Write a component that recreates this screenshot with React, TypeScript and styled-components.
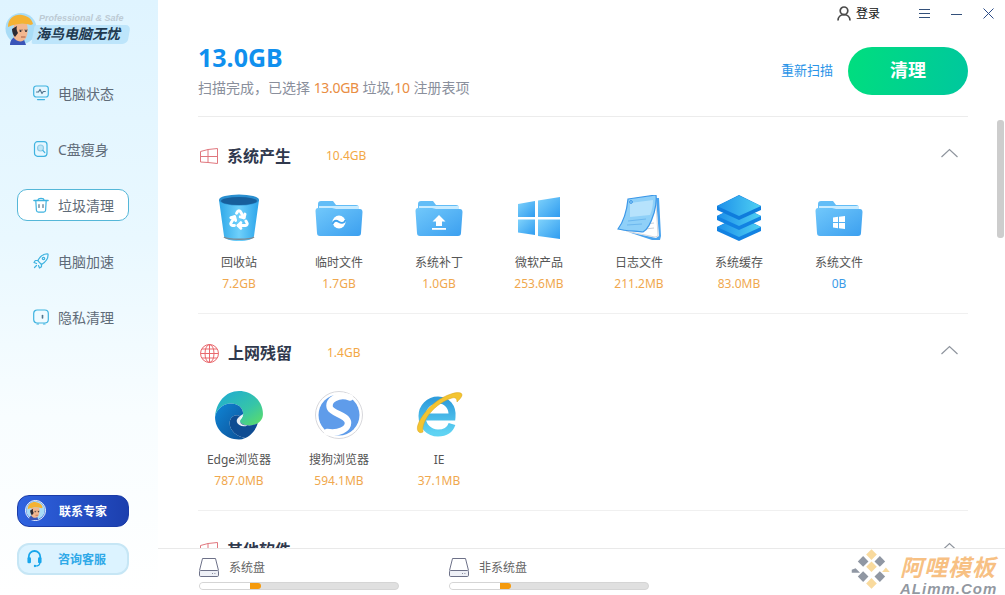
import React from 'react'
import styled, { createGlobalStyle } from 'styled-components'
import { Recycle } from 'lucide-react'

const GlobalStyle = createGlobalStyle`
  html, body {
    margin: 0;
    padding: 0;
    background: #fff;
  }
  body {
    font-family: "Noto Sans", "Noto Sans CJK SC", sans-serif;
  }
`

const Frame = styled.div`
  position: relative;
  display: flex;
  width: 1005px;
  height: 595px;
  overflow: hidden;
  background: #fff;
`

const Sidebar = styled.aside`
  display: flex;
  flex-direction: column;
  flex: 0 0 158px;
  box-sizing: border-box;
  padding: 13px 29px 20px 17px;
  background: linear-gradient(180deg, #dff4ff 0%, #e9f8ff 40%, #f8fdff 70%, #ffffff 100%);
`

const Logo = styled.div`
  display: flex;
  align-items: flex-start;
  height: 33px;
  margin-left: -12px;
  width: 124px;
`

const LogoText = styled.div`
  display: flex;
  flex-direction: column;
  margin-left: -4px;
  flex: 1;
`

const LogoSlogan = styled.span`
  font: italic 700 9px/11px "Liberation Sans", sans-serif;
  color: #bccad4;
  margin: 0 0 0 6px;
  white-space: nowrap;
`

const LogoBanner = styled.span`
  position: relative;
  display: block;
  height: 19px;
  margin-top: 1px;
  padding-left: 3px;
  font: italic 700 14px/17px "Noto Sans CJK SC", sans-serif;
  color: #1f3a50;
  white-space: nowrap;

  &::before {
    content: '';
    position: absolute;
    inset: 0;
    z-index: 0;
    background: #bde5fb;
    border-radius: 2px 5px 5px 2px;
    transform: skewX(-10deg);
  }
`

const LogoName = styled.span`
  position: relative;
`

const Nav = styled.nav`
  display: flex;
  flex-direction: column;
  gap: 24px;
  margin-top: 31px;
`

const NavItem = styled.div<{ $active?: boolean }>`
  display: flex;
  align-items: center;
  gap: 9px;
  box-sizing: border-box;
  height: 32px;
  padding-left: ${p => (p.$active ? '15px' : '16px')};
  border: ${p => (p.$active ? '1px solid #55b7d8' : '0 none')};
  border-radius: 10px;
  background: ${p => (p.$active ? '#fff' : 'transparent')};
  font-size: 14px;
  color: #5f6b78;
`

const SideButton = styled.div<{ $dark?: boolean }>`
  display: flex;
  align-items: center;
  box-sizing: border-box;
  height: 32px;
  padding: 0 0 1px 8px;
  border-radius: 12px;
  border: ${p => (p.$dark ? '1px solid #1b3ca8' : '2px solid #c6e6f5')};
  background: ${p => (p.$dark ? 'linear-gradient(90deg, #2f63e0, #1c3fae)' : '#dcf3ff')};
  font-size: 12px;
  font-weight: 700;
  color: ${p => (p.$dark ? '#fff' : '#2fa9e8')};
`

const SideButtons = styled.div`
  display: flex;
  flex-direction: column;
  gap: 16px;
  margin-top: auto;
`

const SideButtonLabel = styled.span<{ $dark?: boolean }>`
  margin-left: ${p => (p.$dark ? '13px' : '16px')};
`

const RingedAvatar = styled.span`
  display: flex;
  border: 1px solid #fff;
  border-radius: 50%;
  margin-left: -1px;
`

const Main = styled.main`
  display: flex;
  flex-direction: column;
  flex: 1;
  min-width: 0;
`

const Content = styled.div`
  flex: 1;
  min-height: 0;
  overflow: hidden;
`

const TitleBar = styled.div`
  display: flex;
  align-items: center;
  height: 27px;
  padding-right: 11px;
  justify-content: flex-end;
`

const Login = styled.div`
  display: flex;
  align-items: center;
  gap: 5px;
  margin-right: 39px;
  padding-bottom: 1px;
  font-size: 12px;
  color: #111;
`

const WinButtons = styled.div`
  display: flex;
  gap: 21px;
`

const Summary = styled.div`
  display: flex;
  align-items: flex-start;
  box-sizing: border-box;
  height: 90px;
  margin: 0 37px 0 40px;
  padding-top: 20px;
  border-bottom: 1px solid #ececec;
`

const SummaryText = styled.div`
  flex: 1;
`

const Total = styled.div`
  margin-top: -2px;
  font-size: 25px;
  line-height: 24px;
  font-weight: 700;
  color: #1090ee;
`

const SummaryLine = styled.div`
  margin-top: 9px;
  font-size: 14px;
  line-height: 20px;
  color: #8a8f9c;
`

const Hot = styled.span`
  letter-spacing: -0.3px;
  color: #e98d42;
`

const Rescan = styled.span`
  margin: 13px 15px 0 0;
  font-size: 13px;
  line-height: 20px;
  color: #2a94e8;
`

const CleanButton = styled.div`
  display: flex;
  align-items: center;
  justify-content: center;
  box-sizing: border-box;
  width: 120px;
  height: 48px;
  padding-bottom: 5px;
  border-radius: 24px;
  background: linear-gradient(100deg, #00de7e, #00c79e);
  font-size: 18px;
  font-weight: 700;
  color: #fff;
`

const Section = styled.section`
  margin: 0 37px 0 40px;
  padding-bottom: 18px;
  border-bottom: 1px solid #f0f0f0;
`

const SectionHeader = styled.div`
  display: flex;
  align-items: center;
  height: 78px;
  padding: 0 10px 0 2px;
`

const SectionTitle = styled.h2`
  margin: 0 0 2px 9px;
  width: 99px;
  font-size: 16px;
  font-weight: 700;
  color: #30394d;
`

const SectionSize = styled.span`
  flex: 1;
  padding-bottom: 1px;
  font-size: 12px;
  color: #f3a845;
`

const ChevronBox = styled.span`
  display: flex;
  margin-bottom: 6px;
`

const Items = styled.div`
  display: flex;
  margin-left: -9px;
`

const Item = styled.div`
  display: flex;
  flex-direction: column;
  align-items: center;
  width: 100px;
`

const ItemIcon = styled.div`
  display: flex;
  align-items: center;
  justify-content: center;
  height: 46px;
  margin-bottom: 11px;
`

const ItemLabel = styled.span`
  font-size: 12px;
  line-height: 21px;
  color: #555;
`

const ItemSize = styled.span<{ $zero?: boolean }>`
  font-size: 12px;
  line-height: 22px;
  color: ${p => (p.$zero ? '#3a9be8' : '#f0a84e')};
`

const Footer = styled.footer`
  display: flex;
  gap: 50px;
  box-sizing: border-box;
  flex: 0 0 47px;
  padding: 8px 0 0 41px;
  border-top: 1px solid #e9e9e9;
  background: #fff;
`

const Disk = styled.div`
  width: 200px;
`

const DiskHead = styled.div`
  display: flex;
  align-items: center;
  gap: 10px;
  height: 20px;
  font-size: 12px;
  color: #666;
`

const DiskBar = styled.div`
  position: relative;
  box-sizing: border-box;
  height: 8px;
  margin-top: 5px;
  border: 1px solid #d5d5d5;
  border-radius: 4px;
  background: #e0e0e0;
  overflow: hidden;
`

const DiskFill = styled.div`
  height: 100%;
  border-radius: 0 4px 4px 0;
  background: linear-gradient(90deg, #fff 0, #fff 82%, #f59a0c 82%, #f59a0c 100%);
`

const ScrollThumb = styled.div`
  position: absolute;
  left: 997px;
  top: 120px;
  width: 7px;
  height: 118px;
  border-radius: 3px;
  background: #cdcdcd;
`

const Watermark = styled.div`
  position: absolute;
  right: 8px;
  bottom: 0;
  display: flex;
  gap: 5px;
  width: 146px;
  height: 50px;
  pointer-events: none;
`

const WatermarkText = styled.div`
  display: flex;
  flex-direction: column;
`

const WatermarkCn = styled.span`
  margin-top: 8px;
  font: italic 700 23px/26px "Noto Sans CJK SC", sans-serif;
  letter-spacing: 1px;
  color: rgba(245, 172, 90, 0.75);
  white-space: nowrap;
`

const WatermarkEn = styled.span`
  margin-top: 3px;
  font: italic 700 15px/13px "Liberation Sans", sans-serif;
  letter-spacing: 1px;
  color: rgba(110, 118, 130, 0.75);
  white-space: nowrap;
`

const navStroke = { fill: 'none', stroke: '#3fb3e0', strokeWidth: 1.2, strokeLinecap: 'round', strokeLinejoin: 'round' } as const

const StatusIcon = () => (
  <svg width="16" height="16" viewBox="0 0 16 16" {...navStroke}>
    <rect x="0.7" y="1" width="14.6" height="11" rx="2.5" />
    <path d="M3.5 7h2l1.5-2.5 2 4 1.3-2h2" stroke="#52748c" />
    <path d="M4.5 14.6h7" />
  </svg>
)

const SlimIcon = () => (
  <svg width="16" height="16" viewBox="0 0 16 16" {...navStroke}>
    <rect x="1.5" y="0.7" width="12.5" height="14.6" rx="3" />
    <circle cx="7.5" cy="7" r="3" fill="#bfe6f6" stroke="#8fcbe6" />
    <path d="M9.8 9.4l2 2.2" />
  </svg>
)

const TrashIcon = () => (
  <svg width="16" height="16" viewBox="0 0 16 16" {...navStroke}>
    <path d="M1 3.5h14" strokeWidth="1.6" />
    <path d="M5 3.300c0-2.500 6-2.500 6 0" />
    <path d="M2.800 3.800l.6 9.400c.1 1.200 1 1.900 2 1.900h5.200c1 0 1.900-.7 2-1.900l.6-9.400" />
    <path d="M6 7.500v3M10 7.500v3" stroke="#52748c" />
  </svg>
)

const RocketIcon = () => (
  <svg width="16" height="16" viewBox="0 0 16 16" {...navStroke}>
    <path d="M15 1c.4 4-1.500 7.500-6.500 10.500L4.700 7.700C7.500 2.700 11 .6 15 1z" />
    <circle cx="10.500" cy="5.500" r="1.200" />
    <path d="M5 7.500H2.300L1 9.500l2.500 1M8.500 11v2.700l-2 1.300-1-2.500M3.500 12.500L1.500 14.500" />
  </svg>
)

const PrivacyIcon = () => (
  <svg width="16" height="16" viewBox="0 0 16 16" {...navStroke}>
    <rect x="0.7" y="1" width="14.6" height="13" rx="3.500" />
    <path d="M9.500 6.500v2.500" stroke="#52748c" strokeWidth="1.600" />
    <path d="M4 15h1.500M10.500 15H12" />
  </svg>
)

const Avatar = ({ size }: { size: number }) => (
  <svg width={size} height={size} viewBox="0 0 32 32" style={{ flex: 'none' }}>
    <circle cx="16" cy="15.500" r="15.500" fill="#a9dcf6" />
    <path d="M5 32c0-5 3-8 6-8h7l3 8z" fill="#3a55b8" />
    <path d="M9 11h13c1 5 1 10-1 14-2 3-5 4-8 3-3-1-5-4-5-8z" fill="#f2b78f" />
    <path d="M3 14C3 5 10 1 17 2c6 1 10 4 11 9l-2 1c-7-2-14-2-23 2z" fill="#f4b233" />
    <path d="M7 16l5-3c-1 3 0 5 1 7l-3 4c-2-2-3-5-3-8z" fill="#2b2a33" />
    <circle cx="15.500" cy="18" r="1" fill="#2b2a33" />
    <circle cx="21" cy="18" r="1" fill="#2b2a33" />
    <path d="M14 17h4M19 17h4" stroke="#6b5a50" strokeWidth=".6" />
    <path d="M16 24h4.500" stroke="#a65c44" strokeWidth="1" />
  </svg>
)

const Headset = () => (
  <svg width="15" height="19" viewBox="0 0 17 20">
    <path d="M2 10V8a6.500 6.500 0 0 1 13 0v2" fill="none" stroke="#18a6ec" strokeWidth="2" />
    <rect x="0.500" y="8.500" width="4" height="7" rx="1.500" fill="#18a6ec" />
    <rect x="12.500" y="8.500" width="4" height="7" rx="1.500" fill="#18a6ec" />
    <path d="M14.500 15c0 3-3 3.500-5 3.500" fill="none" stroke="#18a6ec" strokeWidth="1.400" />
    <circle cx="9" cy="18.500" r="1.300" fill="#18a6ec" />
  </svg>
)

const UserIcon = () => (
  <svg width="14" height="15" viewBox="0 0 14 15" fill="none" stroke="#4a4a4a" strokeWidth="1.700">
    <circle cx="7" cy="4.800" r="3.800" />
    <path d="M1 14.500c0-3.500 2.500-5.800 6-5.800s6 2.300 6 5.800" />
  </svg>
)

const MenuIcon = () => (
  <svg width="11" height="11" viewBox="0 0 11 11" stroke="#33507a" strokeWidth="1">
    <path d="M0 1.500h11M0 5.500h11M0 9.500h11" />
  </svg>
)

const MinIcon = () => (
  <svg width="11" height="11" viewBox="0 0 11 11" stroke="#33507a" strokeWidth="1">
    <path d="M0 6.500h11" />
  </svg>
)

const CloseIcon = () => (
  <svg width="11" height="11" viewBox="0 0 11 11" stroke="#2a4a86" strokeWidth="1">
    <path d="M.5.500l10 10M10.500.500l-10 10" />
  </svg>
)

const GridMark = () => (
  <svg width="18" height="16" viewBox="0 0 18 16" fill="none" stroke="#e0777e" strokeWidth="1">
    <path d="M.5 3.500L8 1.500v13L.5 14zM8 1.500L17.500.5v15L8 14.500M.5 8.500h17" />
  </svg>
)

const GlobeMark = () => (
  <svg width="19" height="19" viewBox="0 0 19 19" fill="none" stroke="#e9686d" strokeWidth="1">
    <circle cx="9.500" cy="9.500" r="9" />
    <ellipse cx="9.500" cy="9.500" rx="4.500" ry="9" />
    <path d="M9.500.5v18M.5 9.500h18M2 5h15M2 14h15" />
  </svg>
)

const Chevron = () => (
  <svg width="17" height="10" viewBox="0 0 17 10" fill="none" stroke="#8f959e" strokeWidth="1.200">
    <path d="M.5 9L8.500 1.500 16.500 9" />
  </svg>
)

const DiskIcon = () => (
  <svg width="20" height="19" viewBox="0 0 20 19" fill="none" stroke="#6d7188" strokeWidth="1">
    <path d="M.5 12.500L3.500.5h13l3 12" />
    <rect x=".5" y="12.500" width="19" height="6" rx="1.200" fill="#eef0f6" />
    <path d="M13 15.500h.8M15.500 15.500h.8" />
  </svg>
)

const Defs = () => (
  <svg width="0" height="0" style={{ position: 'absolute' }}>
    <defs>
      <linearGradient id="bin" x1="0" y1="0" x2="1" y2="0">
        <stop offset="0" stopColor="#2da7e8" />
        <stop offset=".5" stopColor="#6fd0fb" />
        <stop offset="1" stopColor="#2ba4ea" />
      </linearGradient>
      <linearGradient id="folder" x1="0" y1="0" x2="1" y2="1">
        <stop offset="0" stopColor="#71c8fb" />
        <stop offset="1" stopColor="#3b9fef" />
      </linearGradient>
      <linearGradient id="pane" x1="0" y1="0" x2="1" y2="1">
        <stop offset="0" stopColor="#7fd2fb" />
        <stop offset="1" stopColor="#2f9cf0" />
      </linearGradient>
      <linearGradient id="layer" x1="0" y1="0" x2="1" y2="0">
        <stop offset="0" stopColor="#1d90ea" />
        <stop offset="1" stopColor="#4fd0f2" />
      </linearGradient>
      <linearGradient id="edgeTop" x1="0" y1="0" x2="1" y2="1">
        <stop offset="0" stopColor="#1da8d8" />
        <stop offset=".6" stopColor="#36c5a8" />
        <stop offset="1" stopColor="#60df62" />
      </linearGradient>
      <linearGradient id="edgeLow" x1="0" y1="0" x2="1" y2="1">
        <stop offset="0" stopColor="#0f86d6" />
        <stop offset="1" stopColor="#0d4f96" />
      </linearGradient>
      <linearGradient id="ieBlue" x1="0" y1="0" x2="0" y2="1">
        <stop offset="0" stopColor="#2f9ddc" />
        <stop offset="1" stopColor="#5fd3f3" />
      </linearGradient>
    </defs>
  </svg>
)

const BinIcon = () => (
  <svg width="42" height="48" viewBox="0 0 42 48">
    <path d="M1 6l5 36c.3 3 7 5 15 5s14.700-2 15-5l5-36z" fill="url(#bin)" />
    <ellipse cx="21" cy="6" rx="20" ry="5.500" fill="#2a8fd0" />
    <ellipse cx="21" cy="7" rx="18" ry="4" fill="#175f9c" />
    <path d="M6 43c3 3 27 3 30 0" fill="none" stroke="#7c8a94" strokeWidth="1.500" />
    <Recycle x={10} y={14} width={22} height={22} color="#fff" strokeWidth={3.200} />
  </svg>
)

const FolderIcon = ({ children }: { children: React.ReactNode }) => (
  <svg width="48" height="38" viewBox="0 0 48 38">
    <path d="M3 5c0-2 1-3 3-3h12l3 4h20c2 0 3 1 3 3v8H3z" fill="#62bdf7" />
    <path d="M4 7h40v4H4z" fill="#c7ebff" />
    <path d="M3 9h14l4 1h24c1.500 0 2.500 1 2.500 3l-1.500 21c0 2-1 3-3 3H5c-2 0-3-1-3-3L.5 12c0-2 1-3 2.500-3z" fill="url(#folder)" />
    {children}
  </svg>
)

const TilesIcon = () => (
  <svg width="44" height="42" viewBox="0 0 44 42" fill="url(#pane)">
    <path d="M1 7l17-3v16H1z" />
    <path d="M21 3.500L43 0v20H21z" />
    <path d="M1 22.500h17V38L1 35.500z" />
    <path d="M21 22.500h22V42l-22-3z" />
  </svg>
)

const NoteIcon = () => (
  <svg width="46" height="46" viewBox="0 0 46 46">
    <path d="M12 37l28 6 3-2-3-38h3l2 38-1 4H36z" fill="#4aa3ee" />
    <path d="M10 36l7-24 23-4 2 33-3 1z" fill="#fff" stroke="#b8bcc4" strokeWidth=".6" />
    <path d="M20 20l17-3M20 25l17-3M20 30l18-2M20 35l18-2" stroke="#c9ced6" strokeWidth="1" />
    <path d="M12 4L40 0c1 8-1 14-2 18-3 10-7 17-11 19-6-1-18-1-25-3 6-8 9-20 10-30z" fill="#8fd0f8" stroke="#3b97e8" strokeWidth="1.200" />
    <path d="M14 8l23-3c0 6-1 10-3 15L14 22z" fill="#bfe6fc" opacity=".8" />
    <path d="M12 26l18-2M11 30l15-1" stroke="#6cb7ee" strokeWidth="1" />
    <circle cx="15" cy="7" r="1.400" fill="none" stroke="#3b97e8" />
  </svg>
)

const LayersIcon = () => (
  <svg width="46" height="48" viewBox="0 0 46 48">
    <path d="M1 33l22-11 22 11v4L23 47 1 37z" fill="#1282e2" />
    <path d="M1 33l22-10 22 10-22 10z" fill="url(#layer)" />
    <path d="M1 22L23 11l22 11v4L23 36 1 26z" fill="#1282e2" />
    <path d="M1 22l22-10 22 10-22 10z" fill="url(#layer)" />
    <path d="M1 12L23 1l22 11v4L23 26 1 16z" fill="#0f7cdc" />
    <path d="M1 12L23 1.500 45 12 23 22z" fill="url(#layer)" />
  </svg>
)

const EdgeIcon = () => (
  <svg width="50" height="50" viewBox="0 0 48 48">
    <path d="M1 26C2 12 11 1 24 1c13 0 23 10 23 22 0 7-6 11-13 11-5 0-9-2-9-4 0-2 3-3 3-7 0-6-5-10-12-10C9 13 2 19 1 26z" fill="url(#edgeTop)" />
    <path d="M1 26c1-7 8-13 15-13 7 0 12 4 12 10 0 1-1 2-2 3-4-4-11-1-11 6 0 7 7 13 15 14-2 1-4 1.500-6 1.500C11 47.500 1 38 1 26z" fill="url(#edgeLow)" />
    <path d="M15 32c0-7 7-10 11-6-1 1-1 2-1 4 0 2 4 4 9 4 3 0 6-1 8-2-2 7-8 13-12 14-8-1-15-7-15-14z" fill="#0f4c92" />
    <path d="M28 23c0 3-3 4-3 7s4 4 7 4c-4 2-9 0-10-3-1-4 3-6 6-8z" fill="#fff" opacity=".9" />
  </svg>
)

const SogouIcon = () => (
  <svg width="48" height="48" viewBox="0 0 48 48">
    <circle cx="24" cy="24" r="23.500" fill="#fff" stroke="#d8d8dc" strokeWidth="1" />
    <circle cx="24" cy="24" r="20.500" fill="#5f9cea" />
    <path d="M35 6.500C24 2 12 9 15 17c2.500 6 18 7 18 15 0 6-9 11-21 9" fill="none" stroke="#fff" strokeWidth="6.500" strokeLinecap="round" />
  </svg>
)

const IeIcon = () => (
  <svg width="48" height="48" viewBox="0 0 48 48">
    <path d="M8 26h29c1-10-5-17-14-17C14 9 7 16 7 25c0 10 7 17 16 17 7 0 12-3 14-9" fill="none" stroke="url(#ieBlue)" strokeWidth="7" />
    <path d="M15 21h15" stroke="url(#ieBlue)" strokeWidth="6" />
    <path d="M3 40C-1 34 14 10 36 3c6-2 11-2 11 1 0 2-3 5-5 7 0-3-1-5-5-4C20 12 6 30 8 41c-2 1-4 1-5-1z" fill="#f4c430" stroke="#d9a21c" strokeWidth=".5" />
  </svg>
)

const WatermarkMark = () => (
  <svg width="44" height="48" viewBox="0 0 58 52" style={{ flex: 'none' }} opacity=".85">
    <g fill="#f8d48c">
      <path d="M27 0l7 7-7 7-7-7z" />
      <path d="M27 16l7 7-7 7-7-7z" />
      <path d="M46 24l5 6H41z" />
      <path d="M27 38l7 7-7 7-7-7z" />
    </g>
    <g fill="#7d8694">
      <path d="M16 9l7 7-7 7-7-7z" />
      <path d="M38 9l7 7-7 7-7-7z" />
      <path d="M6 25l6 6H1v-4z" />
      <path d="M16 29l7 7-7 7-7-7z" />
      <path d="M38 29l7 7-7 7-7-7z" />
    </g>
  </svg>
)

const sections = [
  {
    title: '系统产生',
    size: '10.4GB',
    mark: <GridMark />,
    items: [
      { label: '回收站', size: '7.2GB', icon: <BinIcon /> },
      {
        label: '临时文件',
        size: '1.7GB',
        icon: (
          <FolderIcon>
            <circle cx="24" cy="23" r="6.500" fill="#fff" />
            <path d="M17.500 25c2-5 5-3 6.500-2s5 2 6.500-2" fill="none" stroke="#3fa3ef" strokeWidth="1.800" />
          </FolderIcon>
        ),
      },
      {
        label: '系统补丁',
        size: '1.0GB',
        icon: (
          <FolderIcon>
            <path d="M24 16l6.500 6.500H27V27h-6v-4.500h-3.500z" fill="#fff" />
            <path d="M17 29h14v1.800H17z" fill="#fff" />
          </FolderIcon>
        ),
      },
      { label: '微软产品', size: '253.6MB', icon: <TilesIcon /> },
      { label: '日志文件', size: '211.2MB', icon: <NoteIcon /> },
      { label: '系统缓存', size: '83.0MB', icon: <LayersIcon /> },
      {
        label: '系统文件',
        size: '0B',
        icon: (
          <FolderIcon>
            <path d="M18 18.500l5-.7v5.200h-5zM24 17.700l6-.7v6h-6zM18 24h5v5.200l-5-.7zM24 24h6v6l-6-.8z" fill="#fff" />
          </FolderIcon>
        ),
      },
    ],
  },
  {
    title: '上网残留',
    size: '1.4GB',
    mark: <GlobeMark />,
    items: [
      { label: 'Edge浏览器', size: '787.0MB', icon: <EdgeIcon /> },
      { label: '搜狗浏览器', size: '594.1MB', icon: <SogouIcon /> },
      { label: 'IE', size: '37.1MB', icon: <IeIcon /> },
    ],
  },
  {
    title: '其他软件',
    size: '',
    mark: <GridMark />,
    items: [],
  },
]

const navItems = [
  { label: '电脑状态', icon: <StatusIcon /> },
  { label: 'C盘瘦身', icon: <SlimIcon /> },
  { label: '垃圾清理', icon: <TrashIcon />, active: true },
  { label: '电脑加速', icon: <RocketIcon /> },
  { label: '隐私清理', icon: <PrivacyIcon /> },
]

const App = () => {
  return (
    <Frame>
      <GlobalStyle />
      <Defs />
      <Sidebar>
        <Logo>
          <Avatar size={32} />
          <LogoText>
            <LogoSlogan>Professional &amp; Safe</LogoSlogan>
            <LogoBanner>
              <LogoName>海鸟电脑无忧</LogoName>
            </LogoBanner>
          </LogoText>
        </Logo>
        <Nav>
          {navItems.map(n => (
            <NavItem key={n.label} $active={n.active}>
              {n.icon}
              {n.label}
            </NavItem>
          ))}
        </Nav>
        <SideButtons>
          <SideButton $dark>
            <RingedAvatar>
              <Avatar size={19} />
            </RingedAvatar>
            <SideButtonLabel $dark>联系专家</SideButtonLabel>
          </SideButton>
          <SideButton>
            <Headset />
            <SideButtonLabel>咨询客服</SideButtonLabel>
          </SideButton>
        </SideButtons>
      </Sidebar>
      <Main>
        <Content>
          <TitleBar>
            <Login>
              <UserIcon />
              登录
            </Login>
            <WinButtons>
              <MenuIcon />
              <MinIcon />
              <CloseIcon />
            </WinButtons>
          </TitleBar>
          <Summary>
            <SummaryText>
              <Total>13.0GB</Total>
              <SummaryLine>
                扫描完成，已选择 <Hot>13.0GB</Hot> 垃圾,<Hot>10</Hot> 注册表项
              </SummaryLine>
            </SummaryText>
            <Rescan>重新扫描</Rescan>
            <CleanButton>清理</CleanButton>
          </Summary>
          {sections.map(s => (
            <Section key={s.title}>
              <SectionHeader>
                {s.mark}
                <SectionTitle>{s.title}</SectionTitle>
                <SectionSize>{s.size}</SectionSize>
                <ChevronBox>
                  <Chevron />
                </ChevronBox>
              </SectionHeader>
              <Items>
                {s.items.map(i => (
                  <Item key={i.label}>
                    <ItemIcon>{i.icon}</ItemIcon>
                    <ItemLabel>{i.label}</ItemLabel>
                    <ItemSize $zero={i.size === '0B'}>{i.size}</ItemSize>
                  </Item>
                ))}
              </Items>
            </Section>
          ))}
        </Content>
        <Footer>
          {['系统盘', '非系统盘'].map(d => (
            <Disk key={d}>
              <DiskHead>
                <DiskIcon />
                {d}
              </DiskHead>
              <DiskBar>
                <DiskFill style={{ width: '31%' }} />
              </DiskBar>
            </Disk>
          ))}
        </Footer>
      </Main>
      <ScrollThumb />
      <Watermark>
        <WatermarkMark />
        <WatermarkText>
          <WatermarkCn>阿哩模板</WatermarkCn>
          <WatermarkEn>ALimm.Com</WatermarkEn>
        </WatermarkText>
      </Watermark>
    </Frame>
  )
}

export default App
